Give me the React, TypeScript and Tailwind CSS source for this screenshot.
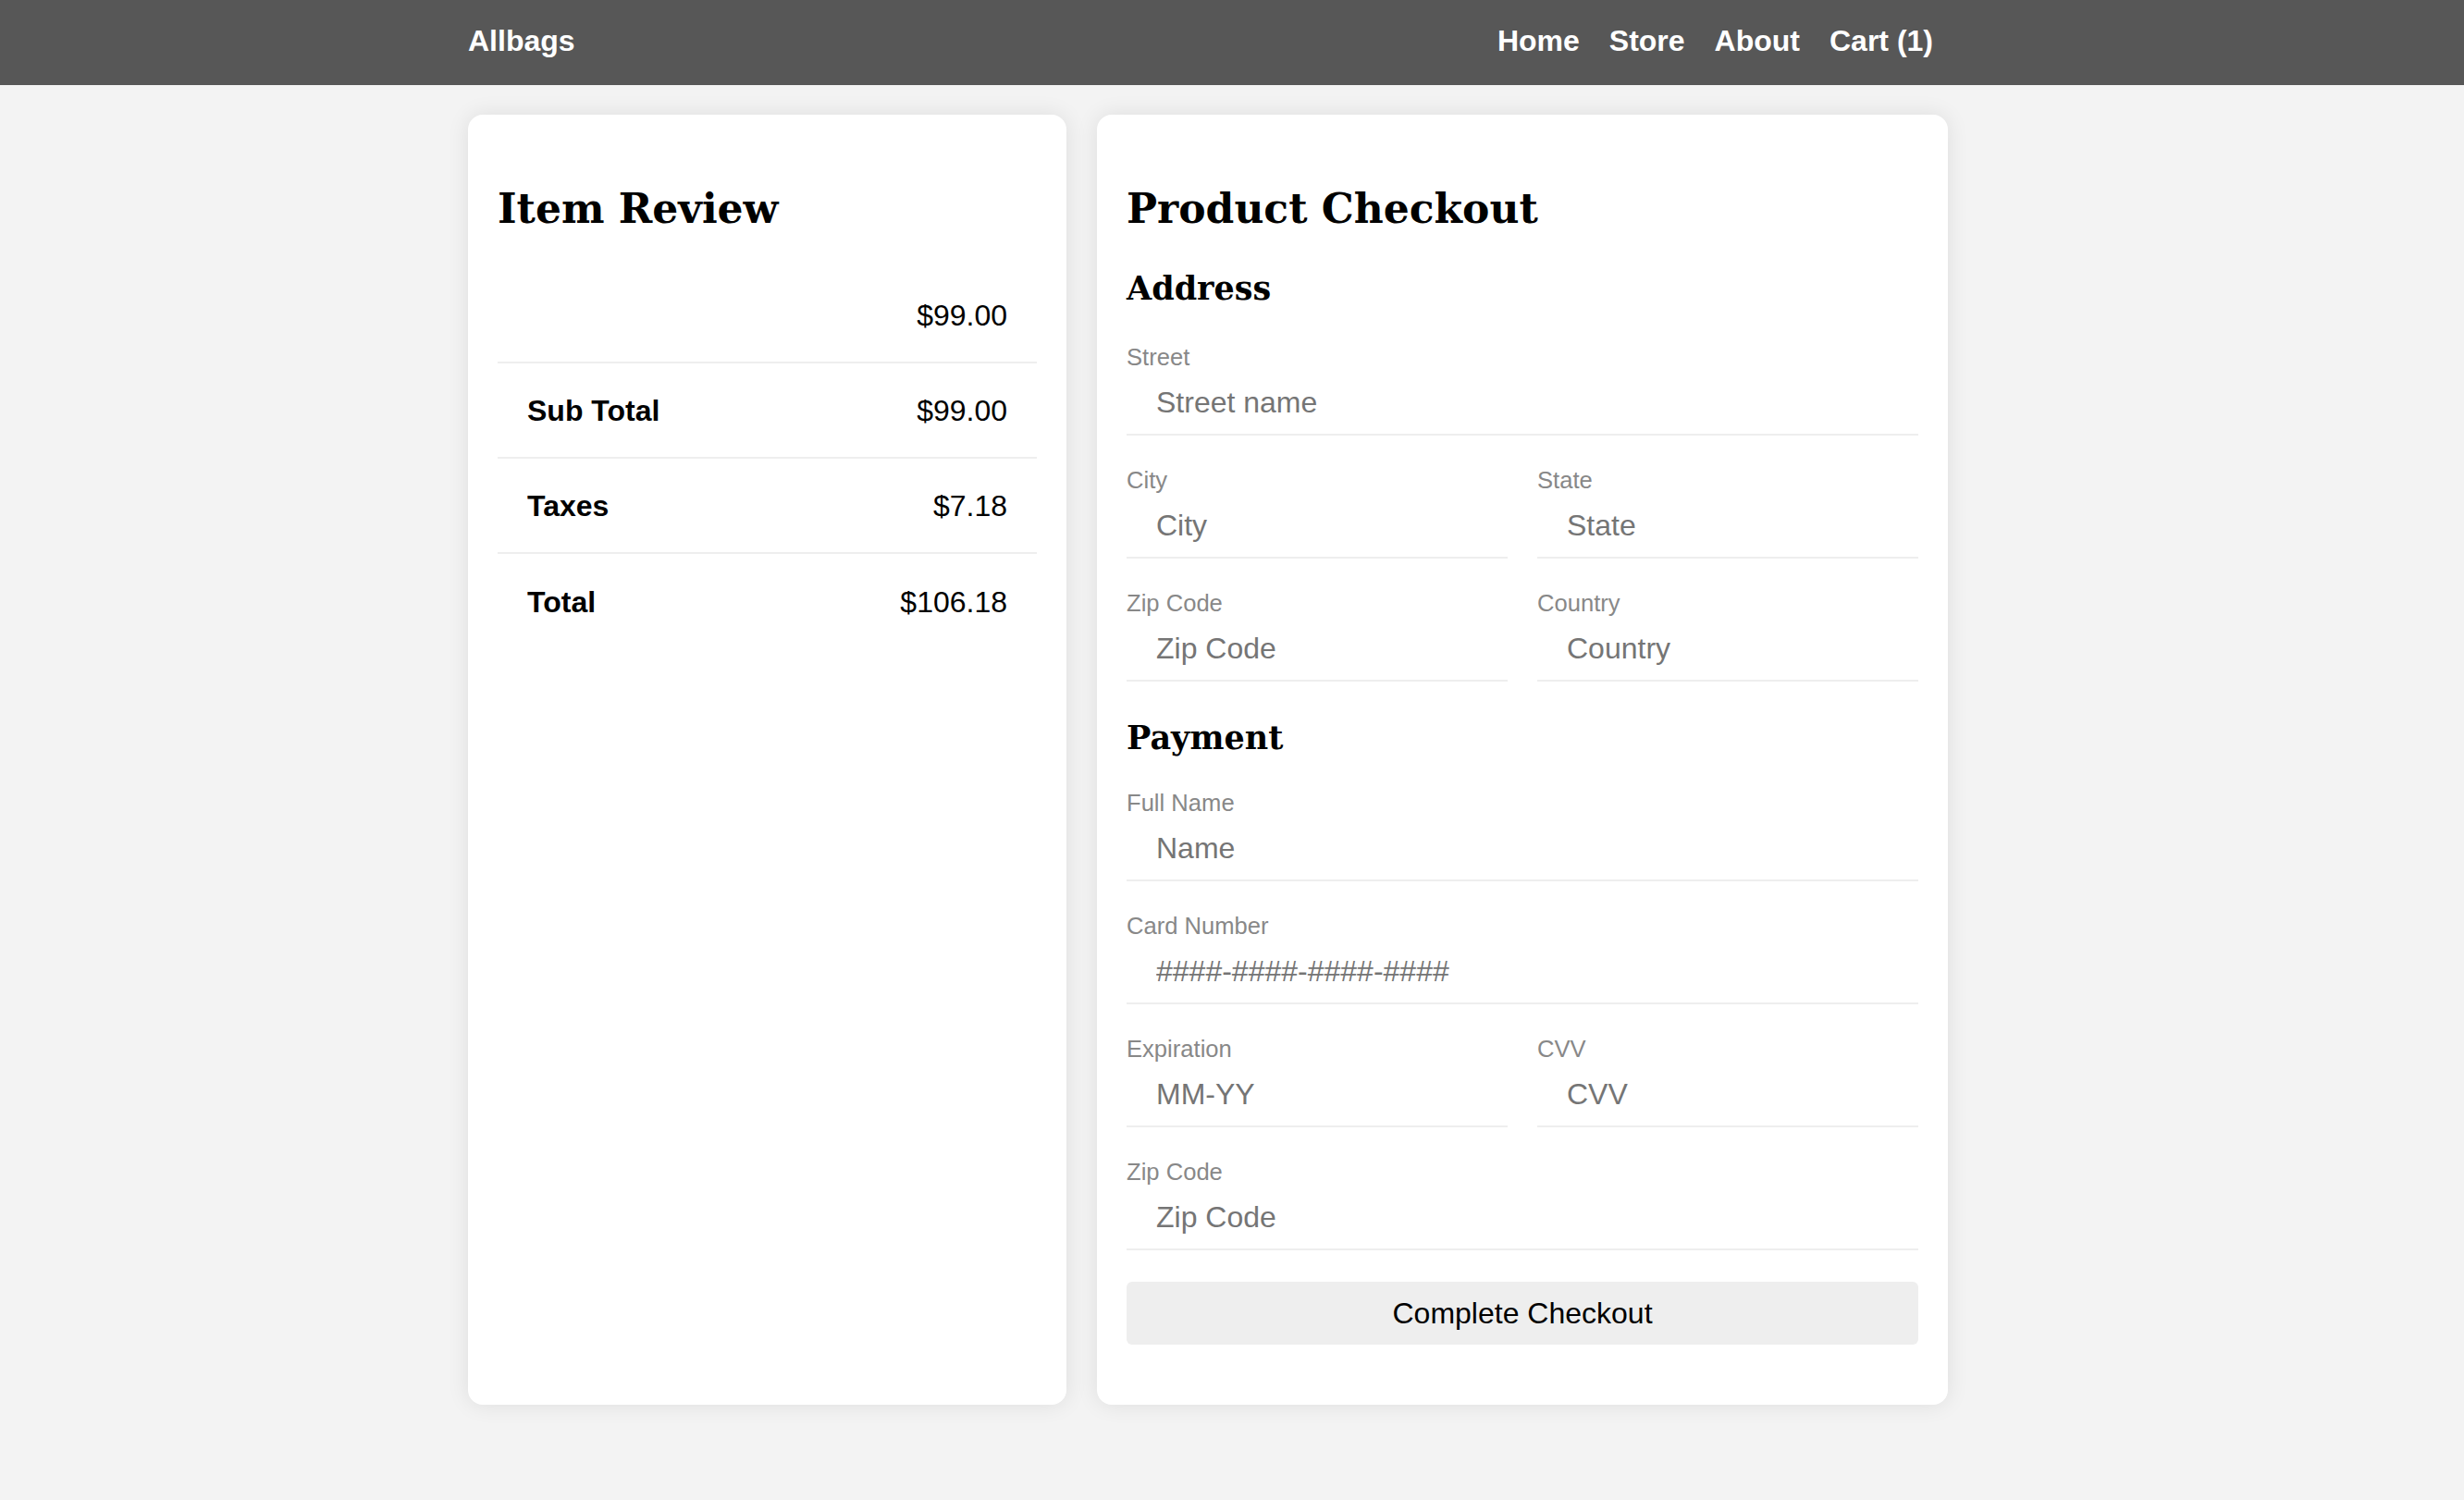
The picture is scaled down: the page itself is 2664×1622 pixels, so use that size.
const sans = 'font-["Liberation_Sans",Arial,sans-serif]';

interface FieldProps {
  label: string;
  placeholder: string;
}

function Field({ label, placeholder }: FieldProps) {
  return (
    <div className="flex flex-col pt-[33px]">
      <label className="text-[25.6px] leading-[30px] text-[#888]">{label}</label>
      <input
        placeholder={placeholder}
        className="h-[70px] w-full border-b-2 border-[#eee] bg-transparent pl-8 text-[32px] text-black outline-none placeholder:text-[#757575]"
      />
    </div>
  );
}

const rows = [
  { label: '', value: '$99.00' },
  { label: 'Sub Total', value: '$99.00' },
  { label: 'Taxes', value: '$7.18' },
  { label: 'Total', value: '$106.18' },
];

export default function App() {
  return (
    <div className={`min-h-screen bg-[#f3f3f3] ${sans}`}>
      <header className="h-[92px] bg-[#575757]">
        <div className="ml-[506px] flex h-full w-[1600px] items-center justify-between pb-1">
          <a className="text-[32px] font-bold leading-none text-white">Allbags</a>
          <nav className="flex items-center">
            {['Home', 'Store', 'About', 'Cart (1)'].map((item) => (
              <a key={item} className="px-4 text-[32px] font-bold leading-none text-white">
                {item}
              </a>
            ))}
          </nav>
        </div>
      </header>

      <main className="ml-[506px] flex w-[1600px] gap-[33px] pt-8">
        <section className="w-[647px] rounded-2xl bg-white px-8 pt-8 shadow-[0_0_24px_rgba(0,0,0,0.09)]">
          <h1 className='mt-[44px] mb-[38px] font-["DejaVu_Serif",Georgia,serif] text-[44px] font-bold leading-[52px] text-black'>
            Item Review
          </h1>
          <div>
            {rows.map((row, i) => (
              <div
                key={i}
                className={`flex h-[103px] items-center justify-between px-8 text-[32px] text-black ${
                  i < rows.length - 1 ? 'border-b-2 border-[#eee]' : ''
                }`}
              >
                <span className="font-bold">{row.label}</span>
                <span>{row.value}</span>
              </div>
            ))}
          </div>
        </section>

        <section className="w-[920px] rounded-2xl bg-white px-8 pt-8 pb-[32px] shadow-[0_0_24px_rgba(0,0,0,0.09)]">
          <h1 className='mt-[44px] font-["DejaVu_Serif",Georgia,serif] text-[44px] font-bold leading-[52px] text-black'>
            Product Checkout
          </h1>
          <h3 className='mt-[41px] mb-[7px] font-["DejaVu_Serif",Georgia,serif] text-[35px] font-bold leading-[38px] text-black'>
            Address
          </h3>
          <Field label="Street" placeholder="Street name" />
          <div className="grid grid-cols-2 gap-x-8">
            <Field label="City" placeholder="City" />
            <Field label="State" placeholder="State" />
            <Field label="Zip Code" placeholder="Zip Code" />
            <Field label="Country" placeholder="Country" />
          </div>

          <h3 className='mt-[42px] mb-[3px] font-["DejaVu_Serif",Georgia,serif] text-[35px] font-bold leading-[38px] text-black'>
            Payment
          </h3>
          <Field label="Full Name" placeholder="Name" />
          <Field label="Card Number" placeholder="####-####-####-####" />
          <div className="grid grid-cols-2 gap-x-8">
            <Field label="Expiration" placeholder="MM-YY" />
            <Field label="CVV" placeholder="CVV" />
          </div>
          <Field label="Zip Code" placeholder="Zip Code" />

          <button className="mt-[34px] mb-[33px] h-[68px] w-full rounded-md bg-[#eee] text-[32px] text-black">
            Complete Checkout
          </button>
        </section>
      </main>
    </div>
  );
}
